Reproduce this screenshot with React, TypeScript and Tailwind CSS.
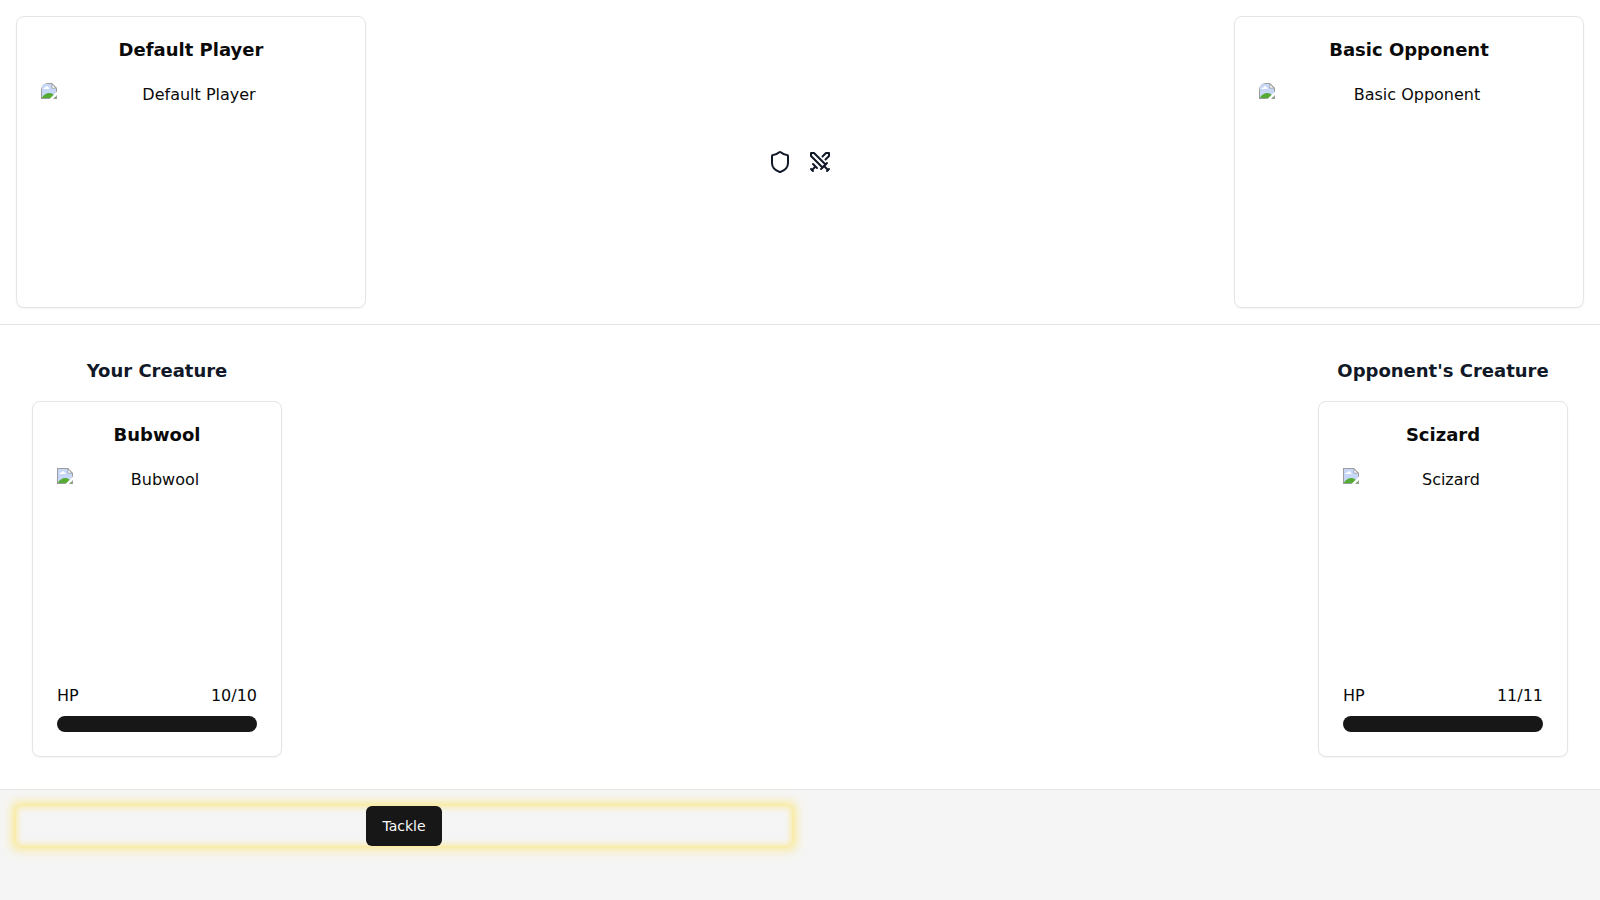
import { useId } from "react";
import { Shield, Swords } from "lucide-react";

type Side = { name: string };
type Creature = { name: string; hp: number; maxHp: number };

function Portrait({ name, rounded }: { name: string; rounded?: boolean }) {
  const clipId = useId();
  return (
    <div className="flex h-[200px] items-start" role="img" aria-label={name}>
      <svg width="16" height="16" viewBox="0 0 16 16" className="shrink-0" aria-hidden="true">
        <clipPath id={clipId}>
          <path d={rounded ? "M0 7A7 7 0 0 1 7 0H16V16H0Z" : "M0 0H16V16H0Z"} />
        </clipPath>
        <g clipPath={`url(#${clipId})`}>
          <path d="M0 0H11L16 5V16H0Z" fill="#9c9c9c" />
          <path d="M1 1H10.5V5.5H15V15H1Z" fill="#c6d7f8" />
          <path d="M2.5 6C2.3 4.6 3.8 4.2 4.5 4.6C5 2.8 7.4 3 7.6 4.6C8.8 4.6 8.8 6 8 6Z" fill="#fff" />
          <path d="M1 15V14.5C3 11.5 5.5 10 8 10C11 10 13.5 12 15 14.5V15Z" fill="#56ab35" />
          <path d="M11.3 1.8L14.2 4.7H11.3Z" fill="#fff" />
          <path d="M8.5 16L16 8.5V12L12 16Z" fill="#fff" />
        </g>
      </svg>
      <span className="flex-1 text-center">{name}</span>
    </div>
  );
}

function CardTitle({ children }: { children: string }) {
  return <h3 className="p-6 text-center text-lg leading-none font-semibold">{children}</h3>;
}

function PlayerCard({ name }: Side) {
  return (
    <article className="w-[350px] rounded-lg border border-[#e5e5e5] bg-white text-neutral-950 shadow-xs">
      <CardTitle>{name}</CardTitle>
      <div className="px-6 pb-6">
        <Portrait name={name} rounded />
      </div>
    </article>
  );
}

function CreatureCard({ name, hp, maxHp }: Creature) {
  return (
    <article className="w-[250px] rounded-lg border border-[#e5e5e5] bg-white text-neutral-950 shadow-xs">
      <CardTitle>{name}</CardTitle>
      <div className="px-6 pb-6">
        <Portrait name={name} />
        <div className="mt-4 mb-2 flex justify-between">
          <span>HP</span>
          <span>
            {hp}/{maxHp}
          </span>
        </div>
        <div
          role="progressbar"
          aria-label={`${name} HP`}
          aria-valuenow={hp}
          aria-valuemin={0}
          aria-valuemax={maxHp}
          className="h-4 overflow-hidden rounded-full bg-neutral-100"
        >
          <div className="h-full bg-neutral-900" style={{ width: `${(hp / maxHp) * 100}%` }} />
        </div>
      </div>
    </article>
  );
}

function CreatureColumn({ title, creature }: { title: string; creature: Creature }) {
  return (
    <section className="flex flex-col items-center gap-4">
      <h2 className="text-lg font-bold">{title}</h2>
      <CreatureCard {...creature} />
    </section>
  );
}

export default function App() {
  return (
    <div className="flex min-h-screen flex-col bg-white font-['DejaVu_Sans',sans-serif] text-[#111827]">
      <header className="flex items-center justify-between border-b border-[#e5e5e5] p-4">
        <PlayerCard name="Default Player" />
        <div className="flex gap-4">
          <Shield size={24} />
          <Swords size={24} />
        </div>
        <PlayerCard name="Basic Opponent" />
      </header>
      <main className="flex justify-between p-8">
        <CreatureColumn title="Your Creature" creature={{ name: "Bubwool", hp: 10, maxHp: 10 }} />
        <CreatureColumn title="Opponent's Creature" creature={{ name: "Scizard", hp: 11, maxHp: 11 }} />
      </main>
      <footer className="grid flex-1 grid-cols-2 content-start gap-4 border-t border-[#e5e5e5] bg-neutral-100 p-4">
        <div className="flex justify-center shadow-[0_0_10px_3px_rgba(255,224,60,0.6),inset_0_0_6px_1px_rgba(255,224,60,0.5)]">
          <button type="button" className="h-10 rounded-md bg-neutral-900 px-4 text-sm text-neutral-50">
            Tackle
          </button>
        </div>
      </footer>
    </div>
  );
}
